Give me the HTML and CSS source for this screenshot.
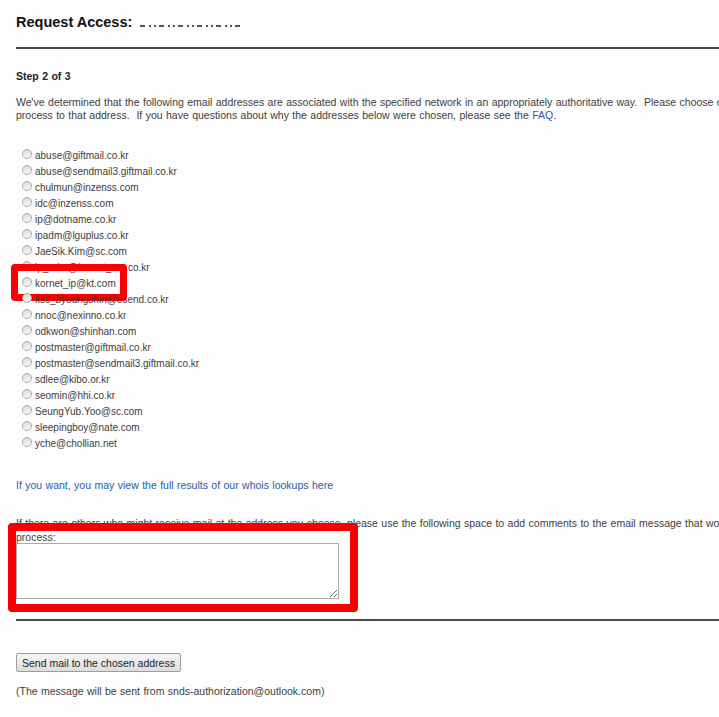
FILE: index.html
```html
<!DOCTYPE html>
<html lang="en">
<head>
  <meta charset="UTF-8">
  <meta name="viewport" content="width=device-width, initial-scale=1">
  <title>Request Access</title>
  <link rel="stylesheet" href="styles.css">
</head>
<body>
  <div class="page">
    <h2 class="title">Request Access: <span class="masked"></span></h2>
    <hr class="rule rule-top">

    <h3 class="step">Step 2 of 3</h3>
    <p class="intro">
      We've determined that the following email addresses are associated with the specified network in an appropriately authoritative way.&nbsp; Please choose one and we will send it a message that lets its owner continue the<br>
      process to that address.&nbsp; If you have questions about why the addresses below were chosen, please see the <a href="#">FAQ</a>.
    </p>

    <ul class="choices">
      <li><label><input type="radio" name="addr"> abuse@giftmail.co.kr</label></li>
      <li><label><input type="radio" name="addr"> abuse@sendmail3.giftmail.co.kr</label></li>
      <li><label><input type="radio" name="addr"> chulmun@inzenss.com</label></li>
      <li><label><input type="radio" name="addr"> idc@inzenss.com</label></li>
      <li><label><input type="radio" name="addr"> ip@dotname.co.kr</label></li>
      <li><label><input type="radio" name="addr"> ipadm@lguplus.co.kr</label></li>
      <li><label><input type="radio" name="addr"> JaeSik.Kim@sc.com</label></li>
      <li><label><input type="radio" name="addr"> ip_adm@kornet_net.co.kr</label></li>
      <li class="marked">
        <label><input type="radio" name="addr"> kornet_ip@kt.com</label>
        <span class="callout callout-pick"></span>
      </li>
      <li><label><input type="radio" name="addr"> ksc_byoungshin@esend.co.kr</label></li>
      <li><label><input type="radio" name="addr"> nnoc@nexinno.co.kr</label></li>
      <li><label><input type="radio" name="addr"> odkwon@shinhan.com</label></li>
      <li><label><input type="radio" name="addr"> postmaster@giftmail.co.kr</label></li>
      <li><label><input type="radio" name="addr"> postmaster@sendmail3.giftmail.co.kr</label></li>
      <li><label><input type="radio" name="addr"> sdlee@kibo.or.kr</label></li>
      <li><label><input type="radio" name="addr"> seomin@hhi.co.kr</label></li>
      <li><label><input type="radio" name="addr"> SeungYub.Yoo@sc.com</label></li>
      <li><label><input type="radio" name="addr"> sleepingboy@nate.com</label></li>
      <li><label><input type="radio" name="addr"> yche@chollian.net</label></li>
    </ul>

    <p class="whois"><a href="#">If you want, you may view the full results of our whois lookups here</a></p>

    <div class="comments">
      <p>If there are others who might receive mail at the address you choose, please use the following space to add comments to the email message that would explain the authorization<br>process:</p>
      <textarea></textarea>
      <span class="callout callout-comments"></span>
    </div>

    <hr class="rule rule-bottom">

    <button class="send">Send mail to the chosen address</button>
    <p class="note">(The message will be sent from snds-authorization@outlook.com)</p>
  </div>
</body>
</html>
```

FILE: styles.css
```css
html, body {
  margin: 0;
  padding: 0;
  background-color: #fdfdfd;
  overflow: hidden;
}

body {
  font-family: 'Liberation Sans', Arial, sans-serif;
  font-size: 10.5px;
  word-spacing: 0.5px;
  color: #3d3d3d;
}

.page {
  width: 1100px;
  padding-left: 16px;
}

a {
  color: #2a5ca8;
  text-decoration: none;
}

p {
  margin: 0;
}

.title {
  margin: 13px 0 0 0;
  font-size: 14.5px;
  line-height: 18px;
  font-weight: bold;
  word-spacing: 0;
  color: #111;
}

.masked {
  display: inline-block;
  width: 103px;
  height: 2px;
  margin-left: 4px;
  vertical-align: baseline;
  background: repeating-linear-gradient(90deg, #555 0 5px, transparent 5px 9px, #555 9px 11px, transparent 11px 14px, #555 14px 16px, transparent 16px 19px);
}

.rule {
  margin: 0;
  border: none;
  height: 2px;
  background-color: #4a4a4a;
}

.rule-top {
  margin-top: 16px;
}

.step {
  margin: 21px 0 0 0;
  font-size: 10.5px;
  line-height: 13px;
  font-weight: bold;
  color: #222;
}

.intro {
  margin-top: 13px;
  line-height: 13px;
  white-space: nowrap;
}

.choices {
  list-style: none;
  margin: 26px 0 0 0;
  padding: 0 0 0 6px;
  font-size: 10px;
  word-spacing: 0;
}

.choices li {
  position: relative;
  height: 16px;
  line-height: 16px;
}

.choices label {
  display: flex;
  align-items: center;
  gap: 3px;
}

input[type="radio"] {
  -webkit-appearance: none;
  appearance: none;
  margin: 0;
  width: 10px;
  height: 10px;
  border: 1px solid #a8a8a8;
  border-radius: 50%;
  background: linear-gradient(#dcdcdc, #fbfbfb);
  position: relative;
  top: -2px;
}

.callout {
  position: absolute;
  border: 7px solid #f60000;
  border-radius: 4px;
  box-sizing: border-box;
}

.callout-pick {
  left: -11px;
  top: -12px;
  width: 116px;
  height: 37px;
}

.whois {
  margin-top: 27px;
  line-height: 13px;
}

.comments {
  position: relative;
  margin-top: 24px;
}

.comments p {
  line-height: 14px;
  white-space: nowrap;
}

.comments textarea {
  display: block;
  box-sizing: border-box;
  width: 323px;
  height: 56px;
  margin: -1px 0 0 0;
  border: 1px solid #a9a9a9;
  background: #fff;
  resize: both;
}

.callout-comments {
  left: -8px;
  top: 7px;
  width: 350px;
  height: 89px;
  border-width: 8px;
}

.rule-bottom {
  margin-top: 20px;
}

.send {
  display: block;
  margin-top: 32px;
  height: 19px;
  width: 165px;
  padding: 0;
  font-family: 'Liberation Sans', Arial, sans-serif;
  font-size: 10.5px;
  color: #222;
  border: 1px solid #9c9c9c;
  border-radius: 2px;
  background: linear-gradient(#f6f6f6, #dedede);
}

.note {
  margin-top: 13px;
  line-height: 13px;
}
```
